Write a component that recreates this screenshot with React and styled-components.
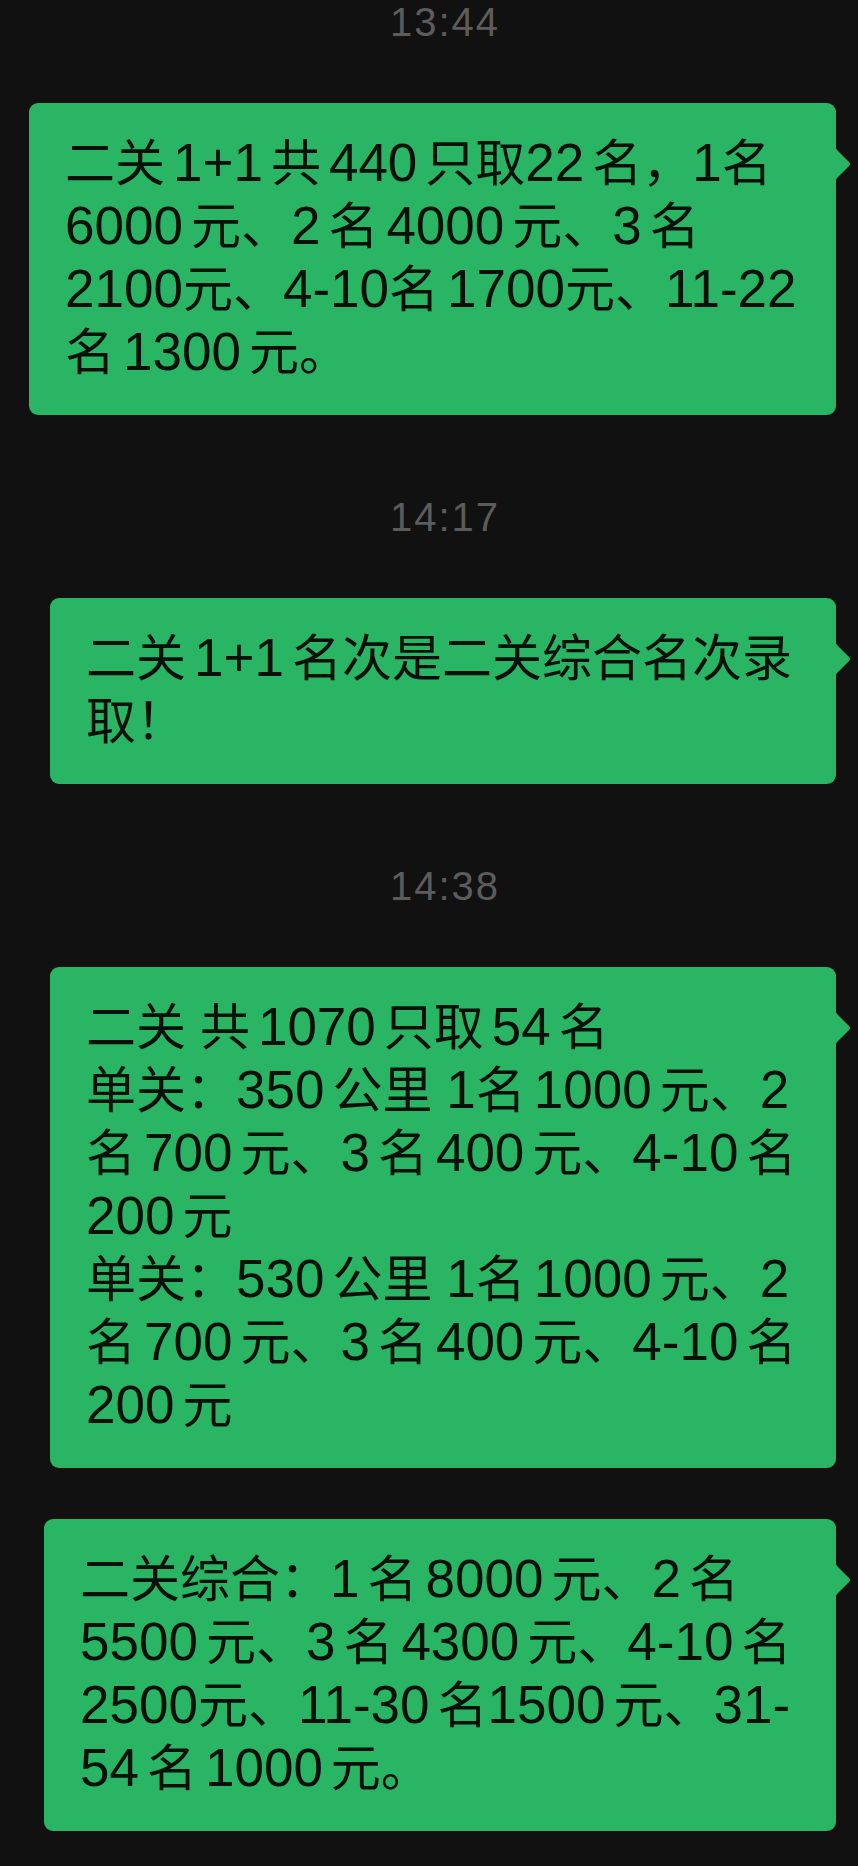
import styled, { createGlobalStyle } from 'styled-components';

const GlobalStyle = createGlobalStyle`
  html, body {
    margin: 0;
    background: #111111;
  }
`;

const Page = styled.div`
  display: flex;
  flex-direction: column;
  align-items: flex-end;
  padding: 0 22px 36px 0;
  min-height: 1866px;
  box-sizing: border-box;
  background: #111111;
  font-family: "Liberation Sans", "Noto Sans CJK SC", sans-serif;
`;

const TimeRow = styled.div`
  align-self: stretch;
  height: 44px;
  padding-left: 54px;
  margin-top: ${p => (p.$first ? '0' : '80px')};
  margin-bottom: 59px;
  text-align: center;
  font-size: 40px;
  line-height: 44px;
  letter-spacing: 2px;
  color: #5c5c5c;
`;

const Bubble = styled.div`
  position: relative;
  box-sizing: border-box;
  width: ${p => p.$width}px;
  padding: 30px 0 30px 36px;
  margin-top: ${p => (p.$stacked ? '51px' : '0')};
  background: #29b563;
  border-radius: 9px;
  color: #07100a;
  font-size: 50px;
  line-height: 63px;
`;

const Line = styled.div`
  white-space: pre;
`;

// latin runs are a bit bigger than the CJK, like the phone font
const Num = styled.span`
  font-size: 53px;
  line-height: 1;
`;

// the small gap the phone puts between CJK and latin runs
const Gap = styled.span`
  display: inline-block;
  width: 8px;
`;

const Tail = styled.svg`
  position: absolute;
  top: 44px;
  right: -15px;
  width: 16px;
  height: 34px;
`;

// "_" in the data marks a gap
const renderLine = text =>
  text.split('_').map((chunk, ci) => (
    <span key={ci}>
      {ci > 0 && <Gap />}
      {chunk.split(/([0-9A-Za-z+\-]+)/).map((part, i) => (i % 2 ? <Num key={i}>{part}</Num> : part))}
    </span>
  ));

const groups = [
  {
    time: '13:44',
    messages: [
      {
        width: 807,
        lines: ['二关_1+1_共_440_只取22_名，1名', '6000_元、2_名_4000_元、3_名', '2100元、4-10名_1700元、11-22', '名_1300_元。'],
      },
    ],
  },
  {
    time: '14:17',
    messages: [{ width: 786, lines: ['二关_1+1_名次是二关综合名次录', '取！'] }],
  },
  {
    time: '14:38',
    messages: [
      {
        width: 786,
        lines: [
          '二关 共_1070_只取_54_名',
          '单关：350_公里 1名_1000_元、2',
          '名_700_元、3_名_400_元、4-10_名',
          '200_元',
          '单关：530_公里 1名_1000_元、2',
          '名_700_元、3_名_400_元、4-10_名',
          '200_元',
        ],
      },
      {
        width: 792,
        lines: ['二关综合：1_名_8000_元、2_名', '5500_元、3_名_4300_元、4-10_名', '2500元、11-30_名1500_元、31-', '54_名_1000_元。'],
      },
    ],
  },
];

function Message({ width, lines, stacked }) {
  return (
    <Bubble $width={width} $stacked={stacked}>
      {lines.map((line, i) => (
        <Line key={i}>{renderLine(line)}</Line>
      ))}
      <Tail viewBox="0 0 16 34">
        <path d="M0 0 C1 1.5 2 3 3.5 4.5 L14 15 Q16 17 14 19 L3.5 29.5 C2 31 1 32.5 0 34 Z" fill="#29b563" />
      </Tail>
    </Bubble>
  );
}

export default function App() {
  return (
    <>
      <GlobalStyle />
      <Page>
        {groups.map((group, gi) => (
          <div key={gi} style={{ display: 'contents' }}>
            <TimeRow $first={gi === 0}>{group.time}</TimeRow>
            {group.messages.map((m, mi) => (
              <Message key={mi} width={m.width} lines={m.lines} stacked={mi > 0} />
            ))}
          </div>
        ))}
      </Page>
    </>
  );
}
